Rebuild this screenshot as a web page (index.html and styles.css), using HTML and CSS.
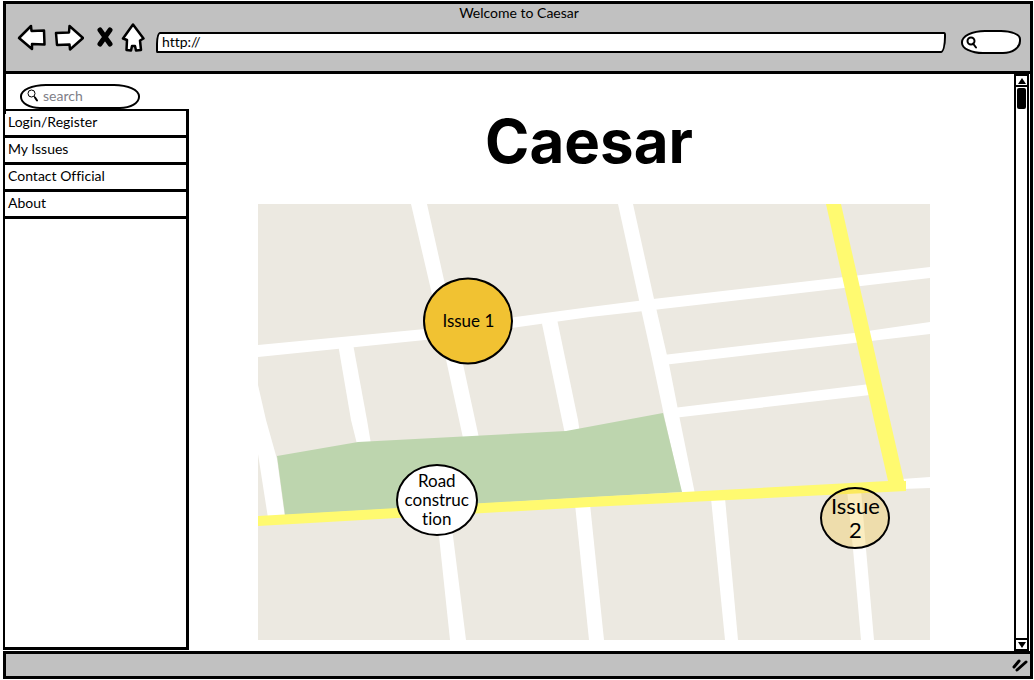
FILE: index.html
```html
<!DOCTYPE html>
<html lang="en">
<head>
<meta charset="utf-8">
<title>Welcome to Caesar</title>
<link rel="stylesheet" href="styles.css">
</head>
<body>
<div class="window">
  <header class="chrome">
    <p class="chrome-title">Welcome to Caesar</p>
    <div class="toolbar">
      <div class="tools">
        <button class="tool" type="button" aria-label="Back">
          <svg width="30" height="28" viewBox="0 0 30 28"><path class="ink" d="M2 14 14 2 14.500 7 27 6.500 27.500 20.500 15 20 15 25Z"/></svg>
        </button>
        <button class="tool" type="button" aria-label="Forward">
          <svg width="30" height="28" viewBox="0 0 30 28"><path class="ink" d="M2 9 15 8.500 15.500 2 29 14 16 25.500 15.500 20.500 3 21Z"/></svg>
        </button>
        <button class="tool tool-stop" type="button" aria-label="Stop">
          <svg width="18" height="24" viewBox="0 0 18 24"><path class="cross" d="M4 4 14 18M14 4 4 18"/></svg>
        </button>
        <button class="tool" type="button" aria-label="Home">
          <svg width="24" height="30" viewBox="0 0 24 30"><path class="ink" d="M12 1.500 22.500 15.500 19 17.500 20 27 15 27.500 14 23 11 23 10 27.500 5.500 27 6 17 2 15.500Z"/></svg>
        </button>
      </div>
      <input class="address" type="text" aria-label="Address" value="http://">
      <label class="web-search">
        <svg width="12" height="13" viewBox="0 0 12 13"><circle class="lens" cx="5" cy="5" r="3.500"/><path class="lens" d="M7 7.500 10 11.500"/></svg>
        <input type="search" aria-label="Web search">
      </label>
    </div>
  </header>
  <div class="page">
    <aside class="sidebar">
      <label class="site-search">
        <svg width="12" height="13" viewBox="0 0 12 13"><circle class="thin" cx="4.500" cy="4.500" r="3.500"/><path class="thin" d="M7 7.500 8 8"/><path class="lens" d="M8 8.500 10 11.500"/></svg>
        <input type="search" placeholder="search" aria-label="Search">
      </label>
      <nav class="menu">
        <a href="#login">Login/Register</a>
        <a href="#issues">My Issues</a>
        <a href="#contact">Contact Official</a>
        <a href="#about">About</a>
      </nav>
    </aside>
    <main class="content">
      <h1>Caesar</h1>
      <div class="map">
        <svg class="map-art" viewBox="0 0 672 436" role="img" aria-label="Street map">
          <rect class="land" width="672" height="436"/>
          <g class="street">
            <path d="M153 0H169L186 76 205 160 221 234H205L189 160 173 86Z"/>
            <path d="M0 141 167 125 332 103 395 95 672 63V74L395 106 332 113 167 136 0 153Z"/>
            <path d="M360 0H375L396 95 411 160 422 216 437 290H424L407 216 393 150 381 96Z"/>
            <path d="M80 140H95L109 216 113 240H99L93 216Z"/>
            <path d="M283 115H299L320 216 322 230H307L304 216Z"/>
            <path d="M0 181 8 216 19 255 27 314H10L0 250Z"/>
            <path d="M405 151 596 129 672 118V130L596 139 405 161Z"/>
            <path d="M415 204 612 180V191L415 214Z"/>
            <path d="M180 304H193L195 332 208 436H192L181 332Z"/>
            <path d="M317 300H332L346 436H331Z"/>
            <path d="M453 294H467L480 436H467Z"/>
            <path d="M589 286H603L608 345 616 436H603L595 345Z"/>
            <path d="M644 275 672 273V284L644 285Z"/>
          </g>
          <path class="park" d="M19 252 100 238 308 227 405 209 424 288 27 311Z"/>
          <path class="highway" d="M0 312 332 293 630 277 616 216 568 0H583L632 216 646 277H648V287L332 303 0 322Z"/>
        </svg>
        <div class="pin pin-amber">Issue 1</div>
        <div class="pin pin-white">Road<br>construc<br>tion</div>
        <div class="pin pin-faded">Issue 2</div>
      </div>
    </main>
    <div class="scrollbar">
      <button type="button" aria-label="Scroll up"><svg width="8" height="6" viewBox="0 0 8 6"><path d="M4 0 8 6H0Z"/></svg></button>
      <div class="track"><div class="thumb"></div></div>
      <button type="button" aria-label="Scroll down"><svg width="8" height="6" viewBox="0 0 8 6"><path d="M0 0H8L4 6Z"/></svg></button>
    </div>
  </div>
  <footer class="status">
    <svg width="16" height="14" viewBox="0 0 16 14"><path class="grip" d="M2 9 7 3M5 12 14 4"/></svg>
  </footer>
</div>
</body>
</html>
```
FILE: styles.css
```css
* { box-sizing: border-box; }
body {
  margin: 0;
  color: #000;
  background: #fff;
  font: 14px/16px Lato, "Open Sans", sans-serif;
  font-variant-ligatures: none;
}
button, input { font: inherit; color: inherit; padding: 0; border: 0; background: none; }
input { min-width: 0; outline: 0; }
svg { display: block; }
.window {
  display: flex;
  flex-direction: column;
  min-height: 100vh;
  padding: 1px 1px 1px 3px;
}
.chrome {
  height: 73px;
  padding: 1px 9px 0 11px;
  border: 3px solid #000;
  background: #c1c1c1;
}
.chrome-title { margin: 0; text-align: center; }
.toolbar { display: flex; align-items: center; gap: 15px; }
.tools { display: flex; align-items: center; gap: 7px; flex: none; }
.tool-stop { margin-left: 5px; }
.ink { fill: #fff; stroke: #000; stroke-width: 2.500; stroke-linejoin: round; }
.cross { fill: none; stroke: #000; stroke-width: 5; stroke-linecap: round; }
.lens { fill: none; stroke: #000; stroke-width: 2; stroke-linecap: round; }
.thin { fill: none; stroke: #000; }
.address {
  flex: 1;
  height: 21px;
  margin: 9px 0 0 -4px;
  padding: 0 4px 2px;
  border: 2px solid #000;
  border-radius: 4px 2px 5px 1px / 12px 3px 16px 2px;
  background: #fff;
}
.web-search {
  display: flex;
  align-items: center;
  width: 60px;
  height: 24px;
  margin-top: 9px;
  padding: 0 3px;
  border: 2px solid #000;
  border-radius: 24px 20px 18px 22px / 12px 9px 13px 11px;
  background: #fff;
}
.web-search input, .site-search input { flex: 1; width: 0; }
.page {
  display: flex;
  flex: 1;
  border-right: 3px solid #000;
}
.sidebar {
  display: flex;
  flex-direction: column;
  width: 186px;
  flex: none;
  padding: 10px 0 1px;
  background: linear-gradient(#000, #000) 0 0 / 3px 40px no-repeat;
}
.site-search {
  display: flex;
  align-items: center;
  gap: 4px;
  width: 120px;
  height: 25px;
  margin-left: 17px;
  padding: 0 5px 2px;
  border: 2px solid #000;
  border-radius: 26px 26px 20px 20px / 12px;
}
.site-search input::placeholder { color: #808088; opacity: 1; }
.menu {
  flex: 1;
  border: 3px solid #000;
  border-width: 2px 3px 3px 2px;
}
.menu a {
  display: block;
  height: 27px;
  padding: 3px;
  border-bottom: 3px solid #000;
  color: inherit;
  text-decoration: none;
}
.content { flex: 1; padding: 32px 84px 10px 69px; }
h1 {
  margin: 0 10px 28px 0;
  font: 700 60px/70px Inter, "Open Sans", sans-serif;
  text-align: center;
}
.map { position: relative; }
.map-art { width: 100%; height: auto; }
.land { fill: #ece9e1; }
.street { fill: #fff; }
.park { fill: #bdd5ae; }
.highway { fill: #fffa70; }
.pin {
  position: absolute;
  display: flex;
  align-items: center;
  justify-content: center;
  transform: translate(-50%, -50%);
  border: 2px solid #000;
  border-radius: 50%;
  text-align: center;
}
.pin-amber { left: 31.3%; top: 26.8%; width: 90px; height: 87px; background: #f1c232; font-size: 17px; }
.pin-white { left: 26.6%; top: 67.9%; width: 82px; height: 72px; padding-bottom: 2px; background: #fff; font-size: 17px; line-height: 19px; }
.pin-faded { left: 88.9%; top: 72%; width: 70px; height: 62px; padding: 0 8px; background: rgba(241, 194, 50, .3); font-size: 22px; line-height: 24px; }
.scrollbar {
  display: flex;
  flex-direction: column;
  width: 15px;
  margin-right: 1px;
  border: 2px solid #000;
}
.scrollbar button {
  display: flex;
  align-items: center;
  justify-content: center;
  height: 9px;
}
.track { flex: 1; padding: 1px; border: solid #000; border-width: 2px 0; }
.thumb { height: 21px; border-radius: 2px; background: #000; }
.status {
  display: flex;
  align-items: center;
  justify-content: flex-end;
  height: 28px;
  padding-right: 2px;
  border: 3px solid #000;
  background: #c1c1c1;
}
.grip { fill: none; stroke: #000; stroke-width: 3; stroke-linecap: round; }
```
